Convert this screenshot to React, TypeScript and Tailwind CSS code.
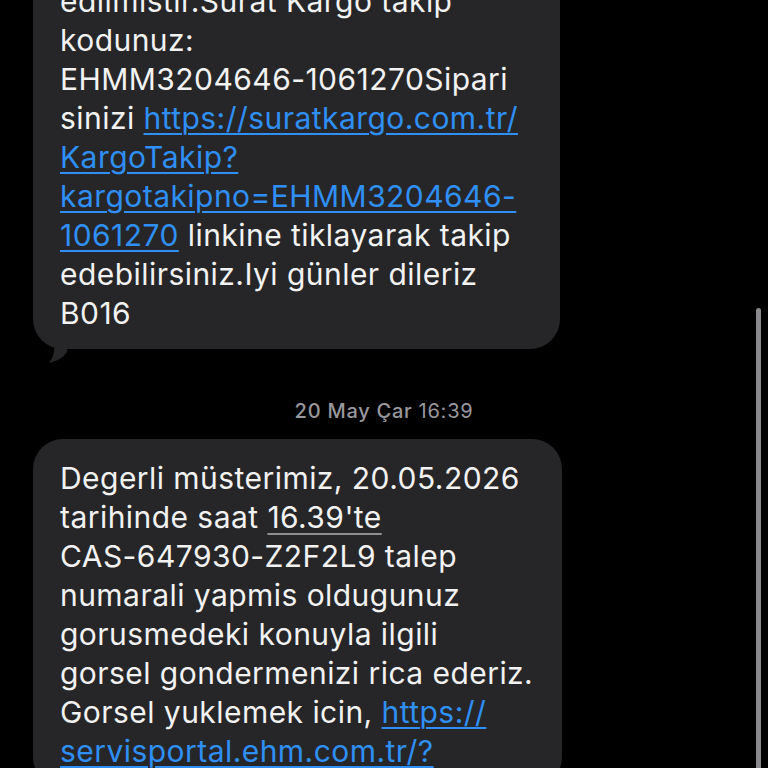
import React from "react";

type Seg = { t: string; kind?: "link" | "data" };
type Line = Seg[];

const first: Line[] = [
  [{ t: "edilmistir.Surat Kargo takip" }],
  [{ t: "kodunuz:" }],
  [{ t: "EHMM3204646-1061270Sipari" }],
  [{ t: "sinizi " }, { t: "https://suratkargo.com.tr/", kind: "link" }],
  [{ t: "KargoTakip?", kind: "link" }],
  [{ t: "kargotakipno=EHMM3204646-", kind: "link" }],
  [{ t: "1061270", kind: "link" }, { t: " linkine tiklayarak takip" }],
  [{ t: "edebilirsiniz.Iyi günler dileriz" }],
  [{ t: "B016" }],
];

const second: Line[] = [
  [{ t: "Degerli müsterimiz, 20.05.2026" }],
  [{ t: "tarihinde saat " }, { t: "16.39'te", kind: "data" }],
  [{ t: "CAS-647930-Z2F2L9 talep" }],
  [{ t: "numarali yapmis oldugunuz" }],
  [{ t: "gorusmedeki konuyla ilgili" }],
  [{ t: "gorsel gondermenizi rica ederiz." }],
  [{ t: "Gorsel yuklemek icin, " }, { t: "https://", kind: "link" }],
  [{ t: "servisportal.ehm.com.tr/?", kind: "link" }],
];

const Text = ({ lines }: { lines: Line[] }) => (
  <div className="text-[30px] leading-[39px] tracking-[0.45px] text-[#f2f2f2] whitespace-pre">
    {lines.map((line, i) => (
      <div key={i}>
        {line.map((s, j) =>
          s.kind === "link" ? (
            <span
              key={j}
              className="text-[#2f8ff5] underline decoration-[2px] underline-offset-[4px]"
            >
              {s.t}
            </span>
          ) : s.kind === "data" ? (
            <span
              key={j}
              className="underline decoration-[#8e8e93] decoration-[2px] underline-offset-[5px]"
            >
              {s.t}
            </span>
          ) : (
            <span key={j}>{s.t}</span>
          )
        )}
      </div>
    ))}
  </div>
);

const Tail = () => (
  <svg
    className="absolute left-[8px] bottom-[-15px]"
    width="34"
    height="34"
    viewBox="0 0 34 34"
  >
    <path
      d="M26 0 L26 22 C22 28 16 31 8 33 C12 28 14 22 13 14 L13 0 Z"
      fill="#262628"
    />
  </svg>
);

const App = () => {
  return (
    <div
      className="relative w-[768px] h-[768px] overflow-hidden bg-black"
      style={{ fontFamily: "Inter, 'Noto Sans', sans-serif" }}
    >
      <div className="flex flex-col pl-[33px] -mt-[38px]">
        <div className="relative w-[527px] rounded-[30px] bg-[#262628] pl-[27px] pr-[16px] pt-[20px] pb-[16px]">
          <Text lines={first} />
          <Tail />
        </div>

        <div className="flex justify-center pr-[33px] mt-[50px] text-[20px] leading-[24px] tracking-[0.75px] text-[#98989d]">
          <span className="font-medium">20 May Çar</span>
          <span className="ml-[6px]">16:39</span>
        </div>

        <div className="mt-[16px] w-[529px] rounded-[30px] bg-[#262628] pl-[27px] pr-[16px] pt-[20px] pb-[16px]">
          <Text lines={second} />
        </div>
      </div>

      {/* scroll indicator */}
      <div className="absolute left-[756px] top-[308px] w-[5px] h-[500px] rounded-full bg-[#8a8a8e]" />
    </div>
  );
};

export default App;
